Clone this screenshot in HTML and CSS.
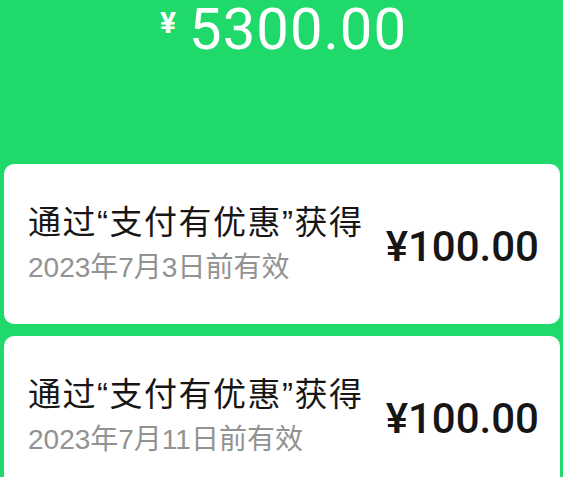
FILE: index.html
```html
<!DOCTYPE html>
<html>

<head>
    <title>优惠券</title>
    <link rel="stylesheet" href="styles.css">
</head>

<body>
    <div class="balance">
        <span class="yen">¥</span><span class="total">5300.00</span>
    </div>

    <div class="list">
        <div class="card">
            <div class="info">
                <div class="title">通过“支付有优惠”获得</div>
                <div class="date">2023年7月3日前有效</div>
            </div>
            <div class="amount">¥100.00</div>
        </div>

        <div class="card">
            <div class="info">
                <div class="title">通过“支付有优惠”获得</div>
                <div class="date">2023年7月11日前有效</div>
            </div>
            <div class="amount">¥100.00</div>
        </div>
    </div>
</body>

</html>
```

FILE: styles.css
```css
body {
    margin: 0;
    background-color: #20d96b;
    font-family: "Liberation Sans", "Noto Sans CJK SC", sans-serif;
    overflow: hidden;
}

.balance {
    height: 164px;
    display: flex;
    justify-content: center;
    align-items: flex-start;
    color: white;
    font-family: Roboto, sans-serif;
    padding-left: 4px;
    box-sizing: border-box;
}

.yen {
    font-size: 30px;
    font-weight: bold;
    line-height: 46px;
    margin-right: 13px;
}

.total {
    font-size: 58px;
    line-height: 58px;
    letter-spacing: 1px;
}

.list {
    display: flex;
    flex-direction: column;
    gap: 12px;
    padding: 0 3px 0 4px;
}

.card {
    height: 160px;
    background-color: white;
    border-radius: 10px;
    display: flex;
    align-items: center;
    justify-content: space-between;
    padding: 0 21px 0 24px;
}

.title {
    font-size: 33px;
    letter-spacing: 1.5px;
    color: #161616;
    line-height: 44px;
}

.date {
    font-size: 28px;
    color: #929292;
    line-height: 38px;
    margin-top: 4px;
}

.amount {
    font-family: Roboto, sans-serif;
    font-size: 42px;
    font-weight: 500;
    color: #161616;
    margin-top: 4px;
}
```
